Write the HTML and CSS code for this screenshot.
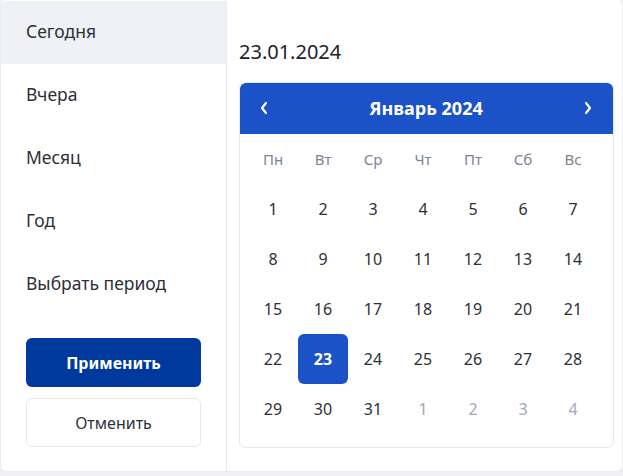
FILE: index.html
```html
<!DOCTYPE html>
<html lang="ru">
<head>
<meta charset="utf-8">
<link rel="stylesheet" href="styles.css">
</head>
<body>
<div class="card">
  <aside class="side">
    <div class="item active">Сегодня</div>
    <div class="item">Вчера</div>
    <div class="item">Месяц</div>
    <div class="item">Год</div>
    <div class="item">Выбрать период</div>
    <div class="actions">
      <button class="btn primary">Применить</button>
      <button class="btn ghost">Отменить</button>
    </div>
  </aside>
  <main class="main">
    <div class="date">23.01.2024</div>
    <div class="cal">
      <div class="cal-head">
        <span class="arrow"><svg width="10" height="14" viewBox="0 0 10 14"><path d="M7 2 L3 7 L7 12" fill="none" stroke="#fff" stroke-width="2.2" stroke-linecap="round" stroke-linejoin="round"/></svg></span>
        <span class="title">Январь 2024</span>
        <span class="arrow"><svg width="10" height="14" viewBox="0 0 10 14"><path d="M3 2 L7 7 L3 12" fill="none" stroke="#fff" stroke-width="2.2" stroke-linecap="round" stroke-linejoin="round"/></svg></span>
      </div>
      <div class="grid">
        <div class="wd">Пн</div><div class="wd">Вт</div><div class="wd">Ср</div><div class="wd">Чт</div><div class="wd">Пт</div><div class="wd">Сб</div><div class="wd">Вс</div>
        <div class="d">1</div><div class="d">2</div><div class="d">3</div><div class="d">4</div><div class="d">5</div><div class="d">6</div><div class="d">7</div>
        <div class="d">8</div><div class="d">9</div><div class="d">10</div><div class="d">11</div><div class="d">12</div><div class="d">13</div><div class="d">14</div>
        <div class="d">15</div><div class="d">16</div><div class="d">17</div><div class="d">18</div><div class="d">19</div><div class="d">20</div><div class="d">21</div>
        <div class="d">22</div><div class="d sel">23</div><div class="d">24</div><div class="d">25</div><div class="d">26</div><div class="d">27</div><div class="d">28</div>
        <div class="d">29</div><div class="d">30</div><div class="d">31</div><div class="d other">1</div><div class="d other">2</div><div class="d other">3</div><div class="d other">4</div>
      </div>
    </div>
  </main>
</div>
</body>
</html>
```
FILE: styles.css
```css
* { box-sizing: border-box; }
html, body { margin: 0; padding: 0; }
body {
  background: #eef0f4;
  font-family: "Noto Sans", "Open Sans", sans-serif;
  color: #2b2b33;
}
.card {
  width: 623px;
  height: 472px;
  background: #fff;
  border: 1px solid #e8ebf2;
  border-top-color: #fff;
  border-radius: 6px;
  display: flex;
  overflow: hidden;
}
.side {
  width: 226px;
  flex: none;
  border-right: 1px solid #e6e9f1;
  display: flex;
  flex-direction: column;
}
.item {
  height: 63px;
  display: flex;
  align-items: center;
  padding-left: 25px;
  padding-bottom: 3px;
  font-size: 17.5px;
  color: #2e2f38;
}
.item.active { background: #f0f1f6; }
.actions {
  margin-top: 22px;
  padding-left: 25px;
  padding-right: 25px;
  display: flex;
  flex-direction: column;
  gap: 11px;
}
.btn {
  height: 49px;
  border-radius: 6px;
  font-family: inherit;
  font-size: 16px;
  cursor: pointer;
}
.btn.primary {
  background: #00399e;
  color: #fff;
  border: none;
  font-weight: 700;
}
.btn.ghost {
  background: #fff;
  color: #2e2f38;
  border: 1px solid #e3e7f0;
}
.main {
  flex: 1;
  padding: 0 9px 0 12px;
  display: flex;
  flex-direction: column;
}
.date {
  height: 81px;
  padding-top: 38px;
  font-size: 20px;
  color: #222228;
  line-height: 26px;
}
.cal {
  width: 375px;
  height: 366px;
  border: 1px solid #e3e7f0;
  border-radius: 7px;
  overflow: hidden;
}
.cal-head {
  height: 52px;
  margin: -1px -1px 0;
  background: #1b52c7;
  color: #fff;
  display: flex;
  align-items: center;
  justify-content: space-between;
  padding: 0 21px 0 20px;
}
.arrow { display: flex; width: 10px; }
.title { font-weight: 700; font-size: 18px; }
.grid {
  display: grid;
  grid-template-columns: repeat(7, 50px);
  grid-auto-rows: 50px;
  padding-left: 8px;
}
.wd, .d {
  display: flex;
  align-items: center;
  justify-content: center;
}
.wd { font-size: 15px; color: #7c8495; }
.d { font-size: 16px; color: #2e2f38; border-radius: 6px; }
.d.sel { background: #1b52c7; color: #fff; font-weight: 700; }
.d.other { color: #a0a8b8; }
```
